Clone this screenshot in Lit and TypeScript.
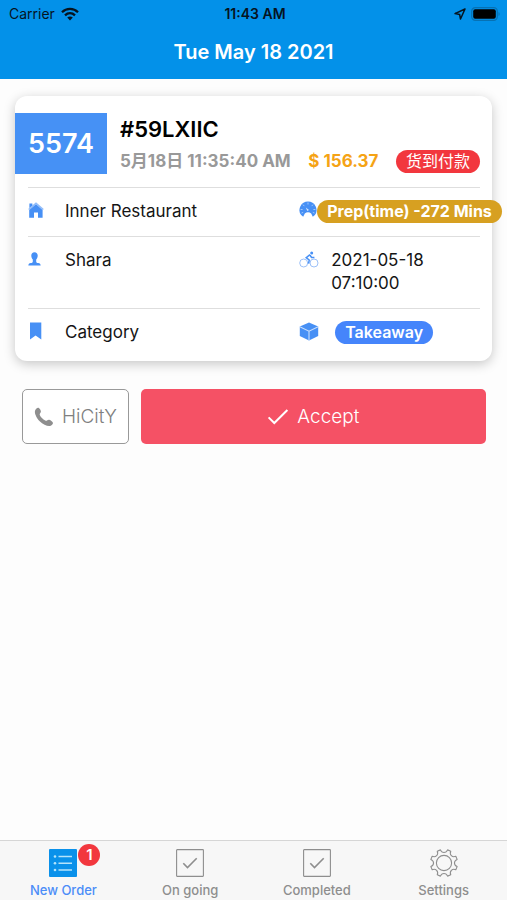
import { LitElement, html, svg, css, nothing } from "lit";
import { customElement, state } from "lit/decorators.js";

const GEAR_TEETH = 8;

// Outline of a cog: flat tooth tips joined by rounded valleys.
function gearPath(cx: number, cy: number, tip: number, valley: number): string {
  const step = (Math.PI * 2) / GEAR_TEETH;
  const at = (r: number, a: number) =>
    `${(cx + r * Math.cos(a)).toFixed(2)} ${(cy + r * Math.sin(a)).toFixed(2)}`;
  let d = "";
  for (let i = 0; i < GEAR_TEETH; i++) {
    const a = step * (i + 0.5);
    d += `${i === 0 ? "M" : "L"}${at(tip, a - step * 0.16)} L${at(tip, a + step * 0.16)} `;
    d += `C${at(valley, a + step * 0.22)} ${at(valley, a + step * 0.78)} ${at(tip, a + step * 0.84)} `;
  }
  return d + "Z";
}

const icons = {
  wifi: svg`<svg viewBox="0 0 18 14" width="18" height="14" fill="none" stroke="#06141f" stroke-width="2.3">
    <path d="M1 5.2C5.5 .8 12.5 .8 17 5.2"/><path d="M4 8.4c3-2.9 7-2.9 10 0"/>
    <path d="M9 13.4 6.2 10.6c1.6-1.5 4-1.5 5.6 0z" fill="#06141f" stroke="none"/></svg>`,
  location: svg`<svg viewBox="0 0 12 12" width="12" height="12" fill="none" stroke="#06141f" stroke-width="1.500" stroke-linejoin="round">
    <path d="M11 1 1 5.6l4.6.8.9 4.6z"/></svg>`,
  battery: svg`<svg viewBox="0 0 30 14" width="30" height="14">
    <rect x=".7" y=".7" width="25.6" height="12.6" rx="3.6" fill="none" stroke="#0671b3" stroke-width="1.2"/>
    <rect x="2.2" y="2.2" width="22.6" height="9.6" rx="2" fill="#000"/><path d="M27.5 5c1.6.6 1.6 3.4 0 4z" fill="#0671b3"/></svg>`,
  home: svg`<svg viewBox="0 0 16 16" width="16" height="16" fill="#4790f5">
    <path d="M1.400 1.400h3v2.200L1.400 6z"/><path d="M8 .3 15.8 7l-1 1L8 2.3 1.2 8l-1-1z" opacity=".6"/>
    <path d="M8 2.200 14.600 8v7.800H10V10.400H6v5.400H1.200V8z"/></svg>`,
  person: svg`<svg viewBox="0 0 14 14" width="14" height="14" fill="#4790f5">
    <path d="M6.500 .2c2 0 3.200 1.300 3.200 3.400 0 1.600-.6 3-1.500 3.900v1.900c0 1 .6 1.400 2 1.700 1.700.4 2.300.8 2.500 2.500H.3c.2-1.700.8-2.100 2.500-2.500 1.400-.3 2-.7 2-1.700V7.500C3.900 6.600 3.300 5.200 3.300 3.600 3.300 1.500 4.500.2 6.500.2z"/></svg>`,
  bookmark: svg`<svg viewBox="0 0 16 18" width="16" height="18" fill="#4790f5"><path d="M2 .5h11.300v17L7.600 13.600 2 17.500z"/></svg>`,
  gauge: svg`<svg viewBox="0 0 18 18" width="18" height="18">
    <path d="M9 .6a8.500 8.500 0 0 0-6.900 13.500l2.100 1.700 1.600-3.400c1.800-1.600 4.600-1.600 6.400 0l1.600 3.400 2.100-1.700A8.500 8.500 0 0 0 9 .6z" fill="#4790f5"/>
    <path d="M9 1.500v2M4 3.600l1.300 1.500M14 3.600l-1.300 1.500M1.600 8.500h2M14.400 8.500h2M2.500 12l1.700-.6M15.500 12l-1.700-.6" stroke="#b9d5fb" stroke-width=".8"/>
    <path d="M6.800 6.600 10 8.900 8.300 10z" fill="#d9e8fd"/></svg>`,
  bike: svg`<svg viewBox="0 0 20 17" width="20" height="17" fill="none">
    <circle cx="4.700" cy="12" r="4" stroke="#9dc1f8"/><circle cx="15" cy="12" r="4" stroke="#9dc1f8"/>
    <circle cx="12.700" cy="2" r="1.500" fill="#4790f5"/>
    <path d="M11 3.600 7.200 6.700l3 2.300-.6 3.600M11 4.200l1.600 2.200h2.800" stroke="#4790f5" stroke-width="1.500"/></svg>`,
  cube: svg`<svg viewBox="0 0 20 19" width="20" height="19">
    <path d="M10 .4 19.200 4.600v9.300L10 18.400.8 13.900V4.600z" fill="#4790f5"/>
    <path d="M.8 4.800 10 9.200l9.200-4.400M10 9.200v9.200" fill="none" stroke="#c9defc" stroke-width="1.100"/></svg>`,
  phone: svg`<svg viewBox="0 0 20 20" width="20" height="20" fill="#8e8e8e">
    <path d="M1.200 3.200C2.200 1.300 3.700.3 4.900 1.100c1 .7 1.900 2.300 2 3.500.1 1.300-1.300 1.800-1.200 2.900.2 1.900 4 5.700 6 6.200 1.200.3 2-1.200 3.300-1 1.400.3 3 1.400 3.700 2.500.8 1.200-.2 2.600-2 3.500-2.300 1.100-7.400-.9-11-4.500C2.300 10.800 0 5.600 1.200 3.200z"/></svg>`,
  check: svg`<svg viewBox="0 0 22 18" width="22" height="18" fill="none" stroke="#fff" stroke-width="2"><path d="m1.600 9.400 5.700 5.600L20.400 2"/></svg>`,
  list: svg`<svg viewBox="0 0 28 28" width="28" height="28">
    <rect width="28" height="28" rx="1" fill="#0a91ea"/>
    <g stroke="#b5e4fb" stroke-width="1.500"><path d="M9.500 7.500H23M9.500 14.200H23M9.500 21H23"/></g>
    <g fill="#b5e4fb"><circle cx="6" cy="7.500" r="1.300"/><circle cx="6" cy="14.200" r="1.300"/><circle cx="6" cy="21" r="1.300"/></g></svg>`,
  box: svg`<svg viewBox="0 0 28 28" width="28" height="28" fill="none" stroke="#8e8e8e">
    <rect x=".6" y=".6" width="26.800" height="26.800" rx=".6" stroke-width="1.100"/><path d="m7.300 14.300 4.200 4.300 9.200-9.300" stroke-width="1.600"/></svg>`,
  gear: svg`<svg viewBox="0 0 28 28" width="28" height="28" fill="none" stroke="#8e8e8e" stroke-width="1.100" stroke-linejoin="round">
    <path d=${gearPath(14, 14, 13.6, 9.8)}/><circle cx="14" cy="14" r="7.600"/></svg>`,
};

const TABS = [
  { label: "New Order", icon: icons.list, count: 1 },
  { label: "On going", icon: icons.box, count: 0 },
  { label: "Completed", icon: icons.box, count: 0 },
  { label: "Settings", icon: icons.gear, count: 0 },
];

@customElement("order-card")
export class OrderCard extends LitElement {
  static styles = css`
    :host { display: block; }
    * { box-sizing: border-box; }
    svg { display: block; flex: none; }
    .card {
      background: #fff;
      border-radius: 12px;
      padding: 17px 0 4px;
      box-shadow: 0 3px 12px rgba(0, 0, 0, 0.22);
    }
    .top { display: flex; align-items: center; gap: 13px; padding-bottom: 13px; }
    .number {
      flex: none;
      width: 92px;
      line-height: 61px;
      background: #4691f5;
      color: #fff;
      font-size: 27px;
      font-weight: 600;
      text-align: center;
    }
    .code { margin: 0; font-size: 22px; line-height: 32px; font-weight: 600; color: #000; }
    .summary { flex: 1; min-width: 0; }
    .meta {
      display: flex;
      align-items: center;
      justify-content: space-between;
      padding: 4px 12px 0 0;
      font-size: 17px;
      line-height: 25px;
      font-weight: 600;
      color: #999;
      white-space: nowrap;
    }
    .date, .price { font-weight: 700; }
    .price { color: #f5a315; }
    .pill {
      display: inline-block;
      border-radius: 12px;
      padding: 0 10px;
      font-size: 16px;
      line-height: 23px;
      font-weight: 600;
      color: #fff;
      white-space: nowrap;
    }
    .cod { background: #f2373e; font-weight: 400; }
    .prep { background: #d7a021; margin-left: -14px; font-weight: 700; }
    .kind { background: #4585fb; margin-left: 4px; }
    .rows { margin: 0 12px 0 13px; }
    .row {
      display: grid;
      grid-template-columns: 3fr 2fr;
      border-top: 1px solid #dedede;
      padding: 12px 0 13px;
      font-size: 17px;
      line-height: 23px;
      color: #151515;
    }
    .cell { display: flex; align-items: flex-start; min-width: 0; }
    .icon { display: flex; align-items: center; flex: none; width: 37px; height: 20px; }
    .right .icon { width: 32px; }
    .when { max-width: 110px; }
  `;

  render() {
    return html`
      <article class="card">
        <div class="top">
          <div class="number">5574</div>
          <div class="summary">
            <h2 class="code">#59LXIIC</h2>
            <div class="meta">
              <span class="date">5月18日 11:35:40 AM</span>
              <span class="price">$ 156.37</span>
              <span class="pill cod">货到付款</span>
            </div>
          </div>
        </div>
        <div class="rows">
          <div class="row">
            <div class="cell"><span class="icon">${icons.home}</span>Inner Restaurant</div>
            <div class="cell right"><span class="icon">${icons.gauge}</span><span class="pill prep">Prep(time) -272 Mins</span></div>
          </div>
          <div class="row">
            <div class="cell"><span class="icon">${icons.person}</span>Shara</div>
            <div class="cell right"><span class="icon">${icons.bike}</span><span class="when">2021-05-18 07:10:00</span></div>
          </div>
          <div class="row">
            <div class="cell"><span class="icon">${icons.bookmark}</span>Category</div>
            <div class="cell right"><span class="icon">${icons.cube}</span><span class="pill kind">Takeaway</span></div>
          </div>
        </div>
      </article>
    `;
  }
}

@customElement("app-root")
export class AppRoot extends LitElement {
  static styles = css`
    :host {
      display: flex;
      flex-direction: column;
      min-height: 100vh;
      background: #fdfdfd;
      font-family: Inter, "Noto Sans CJK SC", sans-serif;
    }
    * { box-sizing: border-box; }
    svg { display: block; flex: none; }
    .header { background: #0391e9; }
    .status {
      display: grid;
      grid-template-columns: 1fr auto 1fr;
      align-items: center;
      height: 27px;
      padding: 0 6px 0 9px;
      font-size: 14px;
      color: #06141f;
    }
    .carrier { display: flex; align-items: center; gap: 6px; }
    .time { font-weight: 600; }
    .power { display: flex; align-items: center; justify-content: flex-end; gap: 5px; }
    .title {
      margin: 0;
      padding-bottom: 2px;
      font-size: 20px;
      line-height: 50px;
      font-weight: 600;
      text-align: center;
      color: #fff;
    }
    .main { flex: 1; padding: 17px 15px; }
    .actions { display: flex; gap: 12px; padding: 28px 6px 0 7px; }
    button { font-family: inherit; margin: 0; cursor: pointer; }
    .action {
      display: flex;
      align-items: center;
      justify-content: center;
      gap: 8px;
      height: 55px;
      border-radius: 5px;
      font-size: 19px;
      font-weight: 300;
    }
    .call { flex: none; padding: 0 11px; border: 1px solid #999; background: #fff; color: #808080; }
    .accept { flex: 1; border: 0; background: #f55165; color: #fff; }
    .tabs {
      display: grid;
      grid-template-columns: repeat(4, 1fr);
      border-top: 1px solid #d6d6d6;
      background: #f7f7f7;
    }
    .tab {
      display: flex;
      flex-direction: column;
      align-items: center;
      gap: 5px;
      padding: 8px 0 1px;
      border: 0;
      background: none;
      color: #8e8e8e;
      font-size: 13px;
      line-height: 17px;
      font-weight: 500;
    }
    .tab[aria-current="page"] { color: #4b8df8; }
    .glyph { position: relative; }
    .count {
      position: absolute;
      top: -5px;
      left: 29px;
      width: 22px;
      border-radius: 11px;
      background: #f2373e;
      color: #fff;
      font-size: 15px;
      line-height: 22px;
      font-weight: 600;
      text-align: center;
    }
  `;

  @state() private current = 0;

  render() {
    return html`
      <header class="header">
        <div class="status">
          <span class="carrier">Carrier ${icons.wifi}</span>
          <span class="time">11:43 AM</span>
          <span class="power">${icons.location}${icons.battery}</span>
        </div>
        <h1 class="title">Tue May 18 2021</h1>
      </header>
      <main class="main">
        <order-card></order-card>
        <div class="actions">
          <button class="action call">${icons.phone}HiCitY</button>
          <button class="action accept">${icons.check}Accept</button>
        </div>
      </main>
      <nav class="tabs">
        ${TABS.map(
          (tab, i) => html`
            <button class="tab" aria-current=${i === this.current ? "page" : "false"} @click=${() => (this.current = i)}>
              <span class="glyph">${tab.icon}${tab.count ? html`<span class="count">${tab.count}</span>` : nothing}</span>
              ${tab.label}
            </button>
          `
        )}
      </nav>
    `;
  }
}
